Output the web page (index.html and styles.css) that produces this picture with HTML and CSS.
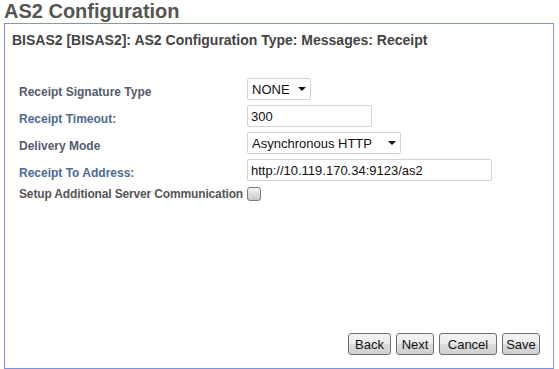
FILE: index.html
```html
<!DOCTYPE html>
<html lang="en">
<head>
   <meta charset="UTF-8">
   <title>AS2 Configuration</title>
   <link rel="stylesheet" href="styles.css">
</head>
<body>
   <h1 class="page-title">AS2 Configuration</h1>
   <div class="config-box">
       <h2 class="box-title">BISAS2 [BISAS2]: AS2 Configuration Type: Messages: Receipt</h2>

       <div class="form-grid">
           <label class="field-label">Receipt Signature Type</label>
           <div class="field">
               <span class="select-wrap">
                   <select class="select sel-sig">
                       <option>NONE</option>
                   </select>
               </span>
           </div>

           <label class="field-label blue">Receipt Timeout:</label>
           <div class="field"><input class="text-input inp-timeout" type="text" value="300"></div>

           <label class="field-label">Delivery Mode</label>
           <div class="field">
               <span class="select-wrap">
                   <select class="select sel-mode">
                       <option>Asynchronous HTTP</option>
                   </select>
               </span>
           </div>

           <label class="field-label blue">Receipt To Address:</label>
           <div class="field"><input class="text-input inp-address" type="text" value="http://10.119.170.34:9123/as2"></div>

           <div class="setup-row">
               <label class="setup-label">Setup Additional Server Communication</label>
               <span class="checkbox"></span>
           </div>
       </div>

       <div class="buttons">
           <button class="btn btn-back">Back</button>
           <button class="btn btn-next">Next</button>
           <button class="btn btn-cancel">Cancel</button>
           <button class="btn btn-save">Save</button>
       </div>
   </div>
</body>
</html>
```

FILE: styles.css
```css
body {
    margin: 0;
    padding: 0 4px;
    font-family: "Liberation Sans", Arial, sans-serif;
    background: white;
}
.page-title {
    margin: 0;
    font-size: 20px;
    line-height: 23px;
    color: #555;
    font-weight: bold;
}
.config-box {
    box-sizing: border-box;
    width: 550px;
    height: 346px;
    border: 1px solid #7b92dc;
    display: flex;
    flex-direction: column;
    padding: 0 13px 13px 7px;
}
.box-title {
    margin: 8px 0 0;
    font-size: 14px;
    line-height: 17px;
    color: #444;
    font-weight: bold;
}
.form-grid {
    display: grid;
    grid-template-columns: 235px auto;
    grid-auto-rows: 22px;
    row-gap: 5px;
    margin-top: 29px;
    align-items: end;
}
.field-label {
    font-size: 12px;
    font-weight: bold;
    color: #545c6c;
    padding-left: 7px;
    line-height: 14px;
    margin-bottom: 1px;
    white-space: nowrap;
}
.field-label.blue {
    color: #4c6a96;
}
.field {
    display: flex;
    align-items: center;
    height: 22px;
}
.setup-row {
    grid-column: 1 / 3;
    display: flex;
    align-items: center;
    gap: 4px;
    padding-left: 7px;
    height: 22px;
    margin-bottom: 3px;
}
.setup-label {
    font-size: 12px;
    font-weight: bold;
    color: #555;
    white-space: nowrap;
    letter-spacing: -0.15px;
}
.select-wrap {
    position: relative;
    display: inline-block;
}
.select-wrap::after {
    content: "";
    position: absolute;
    right: 5px;
    top: 9px;
    border-left: 4px solid transparent;
    border-right: 4px solid transparent;
    border-top: 4px solid #111;
    pointer-events: none;
}
.select {
    appearance: none;
    -webkit-appearance: none;
    box-sizing: border-box;
    height: 22px;
    border: 1px solid #d2d2d2;
    border-radius: 2px;
    background: white;
    font-family: "Liberation Sans", Arial, sans-serif;
    font-size: 13px;
    color: #111;
    padding: 0 0 0 4px;
    margin: 0;
}
.sel-sig {
    width: 64px;
}
.sel-mode {
    width: 154px;
}
.text-input {
    box-sizing: border-box;
    height: 22px;
    border: 1px solid #d2d2d2;
    border-radius: 2px;
    font-family: "Liberation Sans", Arial, sans-serif;
    font-size: 13px;
    color: #111;
    padding: 0 0 0 3px;
    margin: 0;
}
.inp-timeout {
    width: 125px;
}
.inp-address {
    width: 245px;
}
.checkbox {
    box-sizing: border-box;
    width: 14px;
    height: 14px;
    border: 1px solid #7a7a7a;
    border-radius: 3px;
    background: linear-gradient(#f4f4f4, #c8c8c8);
}
.buttons {
    margin-top: auto;
    display: flex;
    justify-content: flex-end;
    gap: 5px;
}
.btn {
    box-sizing: border-box;
    height: 22px;
    padding: 0;
    border: 1px solid #707070;
    border-radius: 3px;
    background: linear-gradient(#f4f4f4 0%, #ebebeb 50%, #dddddd 51%, #cfcfcf 100%);
    font-family: "Liberation Sans", Arial, sans-serif;
    font-size: 13px;
    color: #111;
}
.btn-back {
    width: 43px;
}
.btn-next {
    width: 38px;
}
.btn-cancel {
    width: 58px;
}
.btn-save {
    width: 38px;
}
```
